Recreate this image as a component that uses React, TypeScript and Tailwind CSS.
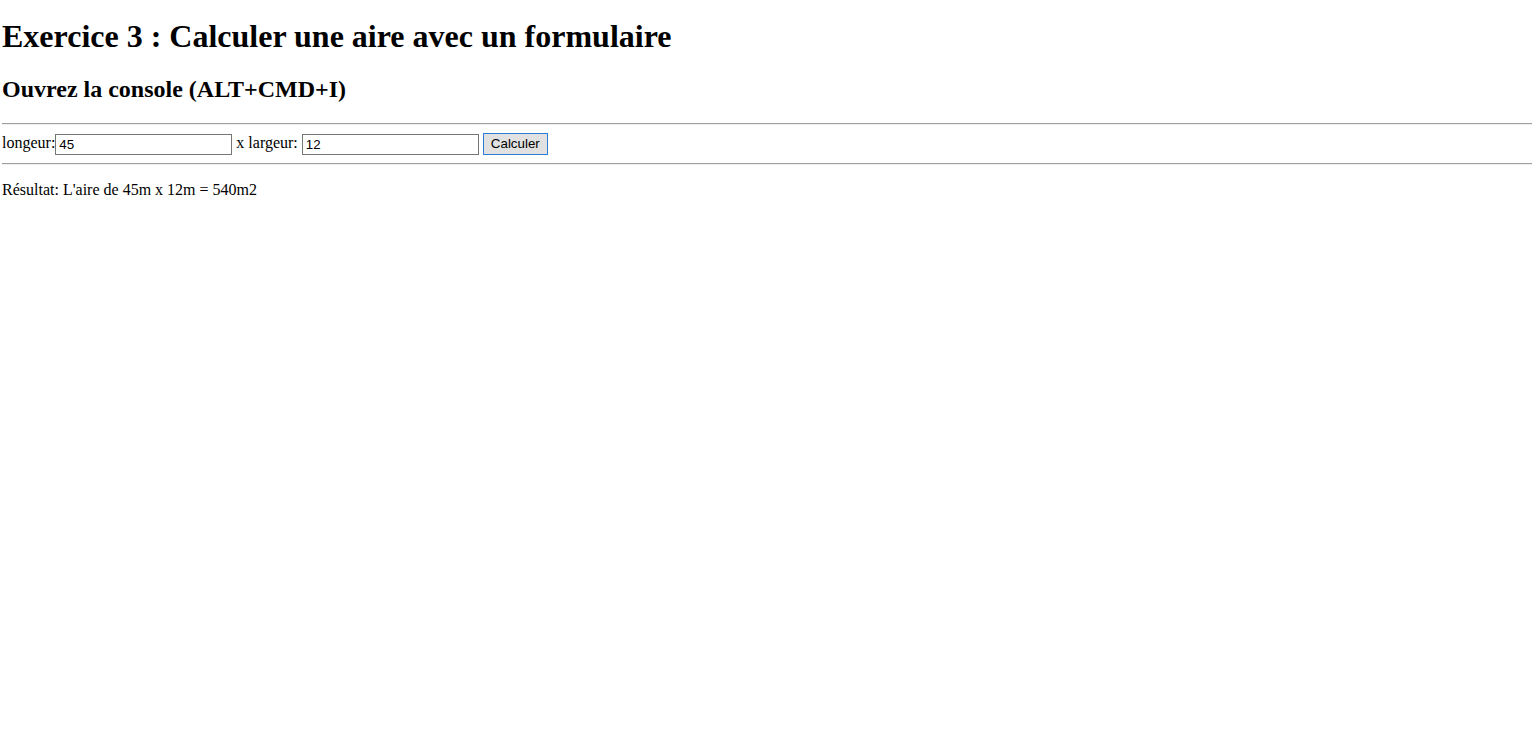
import React from 'react';

const App: React.FC = () => {
  const longeur = 45;
  const largeur = 12;

  return (
    <div className="min-h-[730px] bg-white pl-[2px] pr-[8px] text-black font-['Liberation_Serif',serif]">
      <h1 className="pt-[18px] text-[32px] font-bold leading-[37px]">
        Exercice 3 : Calculer une aire avec un formulaire
      </h1>
      <h2 className="mt-[20px] text-[24px] font-bold leading-[28px]">Ouvrez la console (ALT+CMD+I)</h2>

      <div className="mt-[20px] h-[2px] border-t border-b border-t-[#a0a0a0] border-b-[#eeeeee]" />

      <div className="mt-[8px] flex items-center h-[22px] text-[16px]">
        <span className="leading-[18px] mb-[3px]">longeur:</span>
        <input
          defaultValue={longeur}
          className="w-[177px] h-[21px] border border-[#767676] px-[3px] text-[13.33px] font-['Liberation_Sans',sans-serif] outline-none"
        />
        <span className="ml-[4px] mr-[4px] leading-[18px] mb-[3px]">x largeur:</span>
        <input
          defaultValue={largeur}
          className="w-[177px] h-[21px] border border-[#767676] px-[3px] text-[13.33px] font-['Liberation_Sans',sans-serif] outline-none"
        />
        <button className="ml-[4px] w-[65px] h-[22px] border border-[#2b7cd3] bg-[#e1e1e1] text-[13.33px] font-['Liberation_Sans',sans-serif] leading-none">
          Calculer
        </button>
      </div>

      <div className="mt-[8px] h-[2px] border-t border-b border-t-[#a0a0a0] border-b-[#eeeeee]" />

      <p className="mt-[16px] text-[16px] leading-[18px]">
        Résultat: L'aire de {longeur}m x {largeur}m = {longeur * largeur}m2
      </p>
    </div>
  );
};

export default App;
